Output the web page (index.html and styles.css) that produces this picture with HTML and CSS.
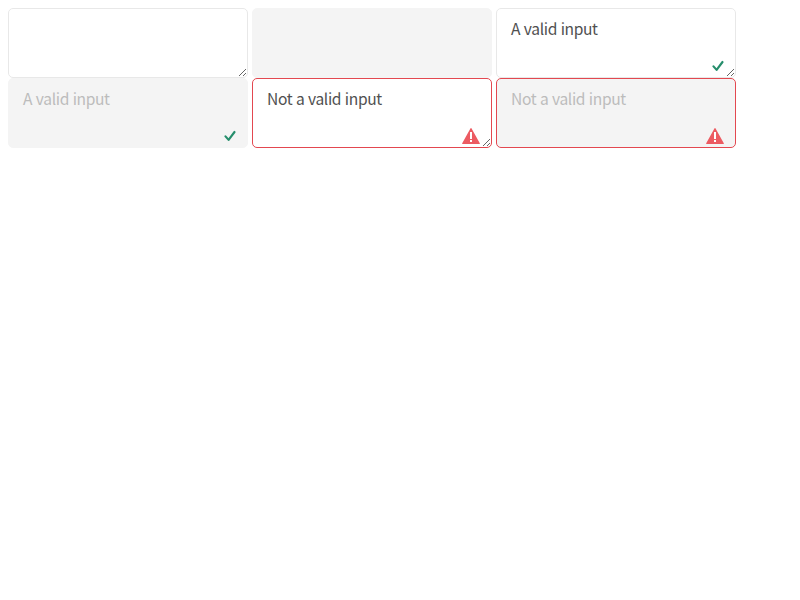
FILE: index.html
```html
<!DOCTYPE html>
<html lang="en">
<head>
<meta charset="utf-8">
<title>Textareas</title>
<link rel="stylesheet" href="styles.css">
</head>
<body>
<div class="grid">
  <div class="field"><textarea class="area"></textarea></div>
  <div class="field"><textarea class="area" disabled></textarea></div>
  <div class="field"><textarea class="area">A valid input</textarea>
    <svg class="check" viewBox="0 0 12 12"><path d="M1.5 6.4 4.6 9.9 10.5 2"/></svg></div>
  <div class="field"><textarea class="area" disabled>A valid input</textarea>
    <svg class="check" viewBox="0 0 12 12"><path d="M1.5 6.4 4.6 9.9 10.5 2"/></svg></div>
  <div class="field"><textarea class="area invalid">Not a valid input</textarea>
    <svg class="alert" viewBox="0 0 18 18"><path class="tri" d="M8.56 1.29.2 16.24A.5.5 0 0 0 .64 17h16.72a.5.5 0 0 0 .44-.76L9.44 1.29a.5.5 0 0 0-.88 0Z"/><path class="mark" d="M8 5h2v7H8zM8 13h2v2H8z"/></svg></div>
  <div class="field"><textarea class="area invalid" disabled>Not a valid input</textarea>
    <svg class="alert" viewBox="0 0 18 18"><path class="tri" d="M8.56 1.29.2 16.24A.5.5 0 0 0 .64 17h16.72a.5.5 0 0 0 .44-.76L9.44 1.29a.5.5 0 0 0-.88 0Z"/><path class="mark" d="M8 5h2v7H8zM8 13h2v2H8z"/></svg></div>
</div>
</body>
</html>
```
FILE: styles.css
```css
body { margin: 8px; background: #fff; }
.grid { display: grid; grid-template-columns: repeat(3, 240px); column-gap: 4px; grid-auto-rows: 70px; }
.field { position: relative; }
.area {
  display: block; box-sizing: border-box; width: 240px; height: 70px; margin: 0;
  padding: 7px 14px 9px; border: 1px solid #e8e8e8; border-radius: 5px;
  background: #fff; color: #505050; overflow: hidden; resize: both;
  font: 15.6px/24px "Noto Sans CJK SC", sans-serif; letter-spacing: -0.37px; word-spacing: 0.6px;
}
.area:disabled { background: #f4f4f4; border-color: #f4f4f4; color: #bcbcbc; resize: none; }
.area.invalid { border-color: #e34850; }
.check { position: absolute; right: 12px; bottom: 6px; width: 12px; height: 12px; fill: none; stroke: #268e6c; stroke-width: 2.15; stroke-linecap: round; stroke-linejoin: round; pointer-events: none; }
.alert { position: absolute; right: 12px; bottom: 3px; width: 18px; height: 18px; pointer-events: none; }
.tri { fill: #ec5b62; }
.mark { fill: #fff; }
```
